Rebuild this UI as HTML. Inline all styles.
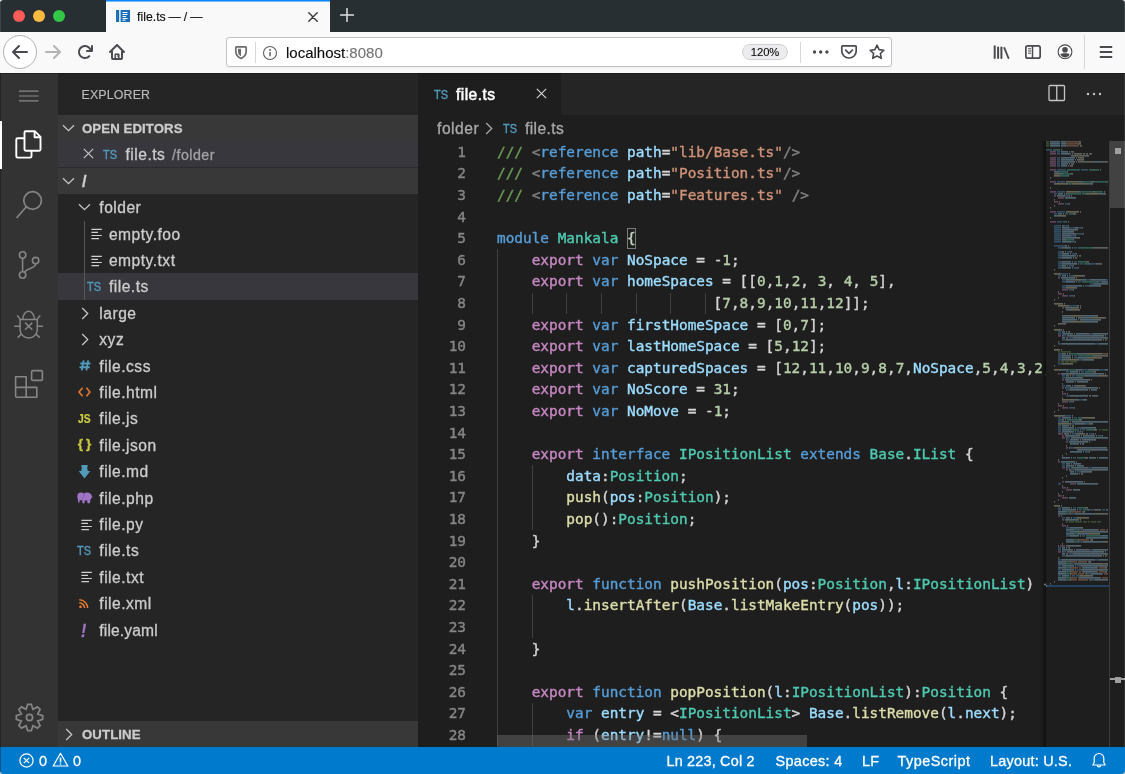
<!DOCTYPE html>
<html lang="en">
<head>
<meta charset="utf-8">
<title>file.ts — / —</title>
<style>
*{box-sizing:border-box;margin:0;padding:0}
html,body{width:1125px;height:774px;overflow:hidden;background:#1e1e1e}
body{position:relative;will-change:transform;-webkit-text-stroke:0.3px;font-family:"Liberation Sans",sans-serif;font-size:15.6px;color:#ccc}
.abs{position:absolute}
svg{display:block}
/* ---------- Firefox chrome ---------- */
#tabbar,#navbar{-webkit-text-stroke:0.12px}
#tabbar{position:absolute;left:0;top:0;width:1125px;height:32px;background:#282f33}
#tl span{position:absolute;top:10px;width:12px;height:12px;border-radius:50%}
#fftab{position:absolute;left:106px;top:0;width:224px;height:32px;background:#f9f9fa;border-top:1px solid #0a84ff;box-shadow:inset 0 1px 0 rgba(10,132,255,0.55)}
#fftab .title{position:absolute;left:31px;top:7.6px;font-size:12.3px;word-spacing:-0.5px;line-height:16px;color:#0c0c0d;white-space:nowrap}
#navbar{position:absolute;left:0;top:32px;width:1125px;height:41px;background:#f9f9fa}
#urlbar{position:absolute;left:226px;top:5px;width:666px;height:30px;background:#fff;border:1px solid #c2c2c5;border-radius:3px;box-shadow:0 1px 2px rgba(0,0,0,0.05)}
#url{position:absolute;left:59px;top:6px;font-size:15px;line-height:18px;color:#0c0c0d;white-space:nowrap}
#url i{font-style:normal;color:#737373}
#zoom{position:absolute;left:515px;top:6px;width:46px;height:16px;border-radius:8px;background:#ececee;border:1px solid #d2d2d5;font-size:11.2px;line-height:14.6px;text-align:center;color:#0c0c0d}
/* ---------- VS Code ---------- */
#activity{position:absolute;left:0;top:73px;width:58px;height:674px;background:#333}
#sidebar{position:absolute;left:58px;top:73px;width:360px;height:674px;background:#252526;overflow:hidden}
#editor{position:absolute;left:418px;top:73px;width:707px;height:674px;background:#1e1e1e;overflow:hidden}
#status{position:absolute;left:0;top:747px;width:1125px;height:27px;background:#007acc;color:#fff;font-size:14.4px}
#status span{position:absolute;top:5.6px;line-height:17px;white-space:nowrap;letter-spacing:0.2px}
/* sidebar */
.row{position:absolute;left:0;width:360px;height:26.4px;line-height:26.4px;white-space:nowrap;color:#ccc;letter-spacing:0.5px}
.row .lbl{position:absolute;top:1.05px}
.hdr{position:absolute;left:0;width:360px;background:#383838;font-weight:bold;font-size:13.2px;line-height:26px;color:#ccc;white-space:nowrap}
.ico{position:absolute;white-space:nowrap}
.ts{font-size:12.8px;letter-spacing:0;color:#519aba;line-height:26.4px;-webkit-text-stroke:0.4px;transform:scaleX(0.86);transform-origin:0 50%}
/* editor */
#tabs{position:absolute;left:0;top:0;width:707px;height:42px;background:#252526}
#tab1{position:absolute;left:0;top:0;width:143px;height:42px;background:#1e1e1e;color:#fff}
#crumbs{position:absolute;left:0;top:42px;width:707px;height:26.4px;line-height:26.4px;color:#a9a9a9;white-space:nowrap}
#code{-webkit-text-stroke:0.4px;position:absolute;left:0;top:68.4px;width:628px;height:606px;overflow:hidden;font-family:"DejaVu Sans Mono","Liberation Mono",monospace;font-size:14.4px;line-height:21.6px;color:#d4d4d4}
.ln{position:absolute;left:0;width:1200px;height:21.6px;white-space:pre}
.ln b{position:absolute;left:0;top:0.45px;width:48px;text-align:right;font-weight:normal;color:#858585}
.ln s{position:absolute;left:79px;top:0.45px;text-decoration:none}
.ln i{font-style:normal}
.g{position:absolute;width:1px;background:#404040}
.c{color:#6a9955}.t{color:#808080}.k{color:#569cd6}.v{color:#9cdcfe}.s{color:#ce9178}.y{color:#4ec9b0}.x{color:#c586c0}.n{color:#b5cea8}.f{color:#dcdcaa}
#minimap{position:absolute;left:628px;top:68px;width:63px;height:606px;background:#1e1e1e;overflow:hidden}
#mshadow{position:absolute;left:621px;top:68px;width:7px;height:606px;background:linear-gradient(90deg,rgba(0,0,0,0),rgba(0,0,0,0.08) 40%,rgba(0,0,0,0.5))}
#vscroll{position:absolute;left:691px;top:68.4px;width:16px;height:606px;border-left:1px solid #3c3c3c}
</style>
</head>
<body>
<!-- FIREFOX TAB BAR -->
<div id="tabbar">
  <div id="tl"><span style="left:13px;background:#fc5b57"></span><span style="left:33px;background:#fdbc40"></span><span style="left:53px;background:#33c748"></span></div>
  <div id="fftab">
    <svg class="abs" style="left:10px;top:9px" width="14" height="12" viewBox="0 0 14 12"><rect x="0" y="0" width="3.2" height="12" fill="#1a6fb8"/><rect x="4.6" y="0" width="9.4" height="12" fill="#1a6fb8"/><g stroke="#fff" stroke-width="1"><path d="M6.5 2.5h5M6.5 4.5h5M6.5 6.5h3.6M6.5 8.5h5M6.5 10.2h3"/></g></svg>
    <div class="title">file.ts — / —</div>
    <svg class="abs" style="left:201.9px;top:10.5px" width="10" height="10" viewBox="0 0 10 10"><path d="M0.8 0.8l8.4 8.4M9.2 0.8l-8.4 8.4" stroke="#3a3a3c" stroke-width="1.4" stroke-linecap="round"/></svg>
  </div>
  <svg class="abs" style="left:340px;top:8px" width="14" height="14" viewBox="0 0 14 14"><path d="M7 0.6v12.8M0.6 7h12.8" stroke="#dfe1e2" stroke-width="1.5" stroke-linecap="round"/></svg>
</div>
<!-- FIREFOX NAV BAR -->
<div id="navbar">
  <div class="abs" style="left:3px;top:3px;width:34px;height:34px;border-radius:50%;background:#fff;border:1px solid #b4b4b6"></div>
  <svg class="abs" style="left:12px;top:12px" width="16" height="16" viewBox="0 0 16 16"><path fill="#4a4a4f" d="M15 7H3.414l4.293-4.293a1 1 0 0 0-1.414-1.414l-6 6a1 1 0 0 0 0 1.414l6 6a1 1 0 0 0 1.414-1.414L3.414 9H15a1 1 0 0 0 0-2z"/></svg>
  <svg class="abs" style="left:45px;top:12px" width="16" height="16" viewBox="0 0 16 16"><path fill="#b4b4b6" d="M1 9h11.586l-4.293 4.293a1 1 0 0 0 1.414 1.414l6-6a1 1 0 0 0 0-1.414l-6-6a1 1 0 0 0-1.414 1.414L12.586 7H1a1 1 0 0 0 0 2z"/></svg>
  <svg class="abs" style="left:77px;top:12px" width="16" height="16" viewBox="0 0 16 16"><path fill="#4a4a4f" d="M15 1a1 1 0 0 0-1 1v2.418A6.995 6.995 0 1 0 8 15a6.954 6.954 0 0 0 4.95-2.05 1 1 0 0 0-1.414-1.414A5.019 5.019 0 1 1 12.549 6H10a1 1 0 0 0 0 2h5a1 1 0 0 0 1-1V2a1 1 0 0 0-1-1z"/></svg>
  <svg class="abs" style="left:109px;top:12px" width="16" height="16" viewBox="0 0 16 16"><g fill="none" stroke="#4a4a4f" stroke-linecap="round" stroke-linejoin="round"><path d="M1 8l7-7 7 7" stroke-width="2"/><path d="M3 7.5V14a1 1 0 0 0 1 1h8a1 1 0 0 0 1-1V7.5" stroke-width="2"/><path d="M6.2 15v-4.7h3.6V15" stroke-width="1.5"/></g><rect x="8" y="11.3" width="1" height="1.3" fill="#4a4a4f"/></svg>
  <div id="urlbar">
    <svg class="abs" style="left:7.2px;top:6.8px" width="14" height="15" viewBox="0 0 14 15"><path d="M2.5 1.9H11.5a.7 .7 0 0 1 .7 .7V6.3C12.2 10 10 12.2 7 13.5 4 12.2 1.8 10 1.8 6.3V2.6a.7 .7 0 0 1 .7-.7z" fill="none" stroke="#6c6c6e" stroke-width="1.7" stroke-linejoin="round"/><path d="M7 3.8H4v2.7C4 8.8 5.2 10.3 7 11.3z" fill="#6c6c6e"/></svg>
    <div class="abs" style="left:28px;top:4px;width:1px;height:21px;background:#d7d7db"></div>
    <svg class="abs" style="left:35px;top:7px" width="16" height="16" viewBox="0 0 16 16"><circle cx="8" cy="8" r="6.5" fill="none" stroke="#5f5f62" stroke-width="1.1"/><rect x="7.3" y="7" width="1.5" height="4.3" fill="#5f5f62"/><circle cx="8.05" cy="5" r="0.95" fill="#5f5f62"/></svg>
    <div id="url">localhost<i>:8080</i></div>
    <div id="zoom">120%</div>
    <div class="abs" style="left:573px;top:4px;width:1px;height:21px;background:#d7d7db"></div>
    <svg class="abs" style="left:585px;top:11.2px" width="18" height="6" viewBox="0 0 18 6"><circle cx="2.5" cy="3" r="1.7" fill="#4a4a4f"/><circle cx="8.7" cy="3" r="1.7" fill="#4a4a4f"/><circle cx="14.9" cy="3" r="1.7" fill="#4a4a4f"/></svg>
    <svg class="abs" style="left:613px;top:6.2px" width="18" height="16" viewBox="0 0 18 16"><path d="M2.5 1.9h13c.4 0 .7.3 .7.7V7c0 4-3.2 7-7.2 7S1.8 11 1.8 7V2.6c0-.4.3-.7.7-.7z" fill="none" stroke="#4a4a4f" stroke-width="1.7"/><path d="M5.6 6.2L9 9.4l3.4-3.2" fill="none" stroke="#4a4a4f" stroke-width="1.7" stroke-linecap="round" stroke-linejoin="round"/></svg>
    <svg class="abs" style="left:641px;top:5px" width="18" height="18" viewBox="0 0 18 18"><path d="M9 2.2l2.1 4.4 4.8.6-3.5 3.3.9 4.8L9 13l-4.3 2.3.9-4.8L2.1 7.2l4.8-.6z" fill="none" stroke="#4a4a4f" stroke-width="1.6" stroke-linejoin="round"/></svg>
  </div>
  <svg class="abs" style="left:993px;top:12px" width="17" height="16" viewBox="0 0 17 16"><g stroke="#4a4a4f" stroke-width="2" stroke-linecap="round"><path d="M1.7 2.2v11.8M5.1 3.6v10.4M8.4 3.6v10.4"/><path d="M11.4 4l4 10" stroke-width="1.9"/></g></svg>
  <svg class="abs" style="left:1025px;top:13px" width="16" height="14" viewBox="0 0 16 14"><rect x="0.85" y="0.85" width="14.3" height="12.3" rx="2" fill="none" stroke="#4a4a4f" stroke-width="1.7"/><path d="M7.5 1v12" stroke="#4a4a4f" stroke-width="1.5"/><path d="M3 3.8h3M3 6h3M3 8.2h3" stroke="#4a4a4f" stroke-width="1"/></svg>
  <svg class="abs" style="left:1057px;top:12px" width="16" height="16" viewBox="0 0 16 16"><circle cx="8" cy="7.8" r="6.9" fill="none" stroke="#4a4a4f" stroke-width="1.1"/><circle cx="8" cy="5.8" r="2.8" fill="#4a4a4f"/><path d="M3.3 10.3C4.5 9.5 6 9.2 8 9.2s3.5.3 4.7 1.1C11.9 12.2 10.1 13.5 8 13.5S4.1 12.2 3.3 10.3z" fill="#4a4a4f"/></svg>
  <div class="abs" style="left:1084px;top:3px;width:1px;height:34px;background:#d7d7db"></div>
  <svg class="abs" style="left:1099px;top:13px" width="14" height="14" viewBox="0 0 14 14"><path d="M1.5 2h11M1.5 7h11M1.5 12h11" stroke="#4a4a4f" stroke-width="1.8" stroke-linecap="round"/></svg>
</div>
<!-- ACTIVITY BAR -->
<div id="activity">
  <svg class="abs" style="left:18px;top:16px" width="22" height="14" viewBox="0 0 22 14"><path d="M1 2.2h19.5M1 7h19.5M1 11.8h19.5" stroke="#8a8a8a" stroke-width="1.2"/></svg>
  <div class="abs" style="left:0;top:48px;width:2.4px;height:48px;background:#fff;z-index:5"></div>
  <svg class="abs" style="left:14px;top:56px" width="29" height="30" viewBox="0 0 29 30"><g fill="none" stroke="#fff" stroke-width="1.9" stroke-linejoin="round"><path d="M10.5 20.5V3.5a1.2 1.2 0 0 1 1.2-1.2h9.3l5.5 5.5v12.7a1.2 1.2 0 0 1-1.2 1.2h-13.6a1.2 1.2 0 0 1-1.2-1.2z"/><path d="M20.6 2.5v5.7h5.7"/><path d="M10.5 9.2H3.7a1.4 1.4 0 0 0-1.4 1.4v16.6a1.4 1.4 0 0 0 1.4 1.4h12.4a1.4 1.4 0 0 0 1.4-1.4v-5.4"/></g></svg>
  <svg class="abs" style="left:14px;top:115px" width="30" height="32" viewBox="0 0 30 32"><circle cx="18.6" cy="12.5" r="8.8" fill="none" stroke="#858585" stroke-width="1.7"/><path d="M12.3 18.8L2.6 30" stroke="#858585" stroke-width="1.7"/></svg>
  <svg class="abs" style="left:14px;top:175px" width="30" height="32" viewBox="0 0 30 32"><g fill="none" stroke="#858585" stroke-width="1.6"><circle cx="8.6" cy="7" r="3.2"/><circle cx="8.6" cy="27" r="3.2"/><circle cx="21.6" cy="12.6" r="3.2"/><path d="M8.6 10.2v13.6M21.6 15.8C21.6 21.5 12 19.2 10.7 24.5"/></g></svg>
  <svg class="abs" style="left:13px;top:236px" width="32" height="32" viewBox="0 0 32 32"><g fill="none" stroke="#858585" stroke-width="1.5"><path d="M7.1 10.6H24.3V20.4a8.6 8.6 0 0 1-17.2 0z"/><path d="M9.8 10.6a5.8 8.4 0 0 1 11.6 0"/><path d="M7.1 17.2H1.3M24.3 17.2H30M7.3 10.4L4.2 6.4M24.1 10.4L27.2 6.4M8.8 24.6l-4.1 4M22.6 24.6l4.1 4"/><path d="M12.1 13.6l7.2 7.2M19.3 13.6l-7.2 7.2"/></g></svg>
  <svg class="abs" style="left:13px;top:295.4px" width="32" height="32" viewBox="0 0 32 32"><g fill="none" stroke="#858585" stroke-width="1.6" stroke-linejoin="round"><path d="M2.6 8.8h10.6v10.6h10.6v9.8H3.8a1.2 1.2 0 0 1-1.2-1.2zM2.6 19.4h10.6v9.8"/><rect x="18.6" y="2.6" width="10.8" height="9.8" rx="1.2"/></g></svg>
  <svg class="abs" style="left:14.8px;top:629.5px" width="29" height="29" viewBox="0 0 29 29"><path d="M12.68 1.33 L16.32 1.33 L17.91 6.28 L22.53 3.9 L25.1 6.47 L22.72 11.09 L27.67 12.68 L27.67 16.32 L22.72 17.91 L25.1 22.53 L22.53 25.1 L17.91 22.72 L16.32 27.67 L12.68 27.67 L11.09 22.72 L6.47 25.1 L3.9 22.53 L6.28 17.91 L1.33 16.32 L1.33 12.68 L6.28 11.09 L3.9 6.47 L6.47 3.9 L11.09 6.28Z" fill="none" stroke="#858585" stroke-width="1.7" stroke-linejoin="miter"/><circle cx="14.5" cy="14.5" r="3.1" fill="none" stroke="#858585" stroke-width="1.7"/></svg>
</div>
<!-- SIDEBAR -->
<div id="sidebar">
<div class="abs" style="left:23.5px;top:14px;font-size:12.4px;line-height:16px;color:#bbb;letter-spacing:0.15px;-webkit-text-stroke:0.15px">EXPLORER</div>
<div class="hdr" style="top:42px;height:26.5px"><span class="abs" style="left:24px;top:1px;letter-spacing:0.1px">OPEN EDITORS</span></div><svg class="abs" style="left:4.2px;top:51px" width="13" height="8" viewBox="0 0 13 8"><path d="M1 1.2l5.5 5.5L12 1.2" fill="none" stroke="#c5c5c5" stroke-width="1.3"/></svg>
<div class="row" style="top:68.5px;height:25.5px;background:#37373d"><svg class="abs" style="left:25.3px;top:6.2px" width="11" height="11" viewBox="0 0 11 11"><path d="M0.8 0.8l9.4 9.4M10.2 0.8l-9.4 9.4" stroke="#c5c5c5" stroke-width="1.2"/></svg><span class="ico ts" style="left:45px;top:0">TS</span><span class="lbl" style="left:67.5px;top:0.1px">file.ts</span><span class="lbl" style="left:114px;top:0.1px;font-size:14.2px;color:#a2a2a4;letter-spacing:0.5px">/folder</span></div>
<div class="hdr" style="top:94px;height:27.2px;border-top:1px solid #2b2b2c"><span class="abs" style="left:24px;top:-0.5px;font-size:16.5px">/</span></div><svg class="abs" style="left:4.2px;top:104px" width="13" height="8" viewBox="0 0 13 8"><path d="M1 1.2l5.5 5.5L12 1.2" fill="none" stroke="#c5c5c5" stroke-width="1.3"/></svg>
<div class="row" style="top:121.2px"><span class="lbl" style="left:41.3px">folder</span></div>
<svg class="abs" style="left:20.4px;top:130.4px" width="13" height="8" viewBox="0 0 13 8"><path d="M1 1.2l5.5 5.5L12 1.2" fill="none" stroke="#c5c5c5" stroke-width="1.3"/></svg>
<div class="row" style="top:147.6px"><span class="lbl" style="left:50.9px">empty.foo</span></div>
<svg class="abs" style="left:32.5px;top:155.1px" width="11" height="12" viewBox="0 0 11 12"><path d="M0.4 1.3h10.4M0.4 4.4h6.6M0.4 7.5h10.4M0.4 10.6h7.6" stroke="#cdd0cf" stroke-width="1.15"/></svg>
<div class="row" style="top:174px"><span class="lbl" style="left:50.9px">empty.txt</span></div>
<svg class="abs" style="left:32.5px;top:181.5px" width="11" height="12" viewBox="0 0 11 12"><path d="M0.4 1.3h10.4M0.4 4.4h6.6M0.4 7.5h10.4M0.4 10.6h7.6" stroke="#cdd0cf" stroke-width="1.15"/></svg>
<div class="row" style="top:200.4px;background:#37373d"><span class="lbl" style="left:50.9px">file.ts</span></div>
<span class="ico" style="left:28.7px;top:204.1px;line-height:20px;font-size:12.8px;color:#519aba;font-weight:normal;-webkit-text-stroke:0.4px;transform:scaleX(0.86);transform-origin:0 50%">TS</span>
<div class="row" style="top:226.8px"><span class="lbl" style="left:41.3px">large</span></div>
<svg class="abs" style="left:23.3px;top:233.5px" width="8" height="13" viewBox="0 0 8 13"><path d="M1.2 1l5.5 5.5L1.2 12" fill="none" stroke="#c5c5c5" stroke-width="1.3"/></svg>
<div class="row" style="top:253.2px"><span class="lbl" style="left:41.3px">xyz</span></div>
<svg class="abs" style="left:23.3px;top:259.9px" width="8" height="13" viewBox="0 0 8 13"><path d="M1.2 1l5.5 5.5L1.2 12" fill="none" stroke="#c5c5c5" stroke-width="1.3"/></svg>
<div class="row" style="top:279.6px"><span class="lbl" style="left:41.3px">file.css</span></div>
<svg class="abs" style="left:20.5px;top:287.4px" width="12" height="11" viewBox="0 0 12 11"><path d="M4.6 0.3L2.8 10.3M9.2 0.3L7.4 10.3M1.3 3.5h10.2M0.5 7.2h10.2" fill="none" stroke="#519aba" stroke-width="1.9"/></svg>
<div class="row" style="top:306px"><span class="lbl" style="left:41.3px">file.html</span></div>
<svg class="abs" style="left:20.2px;top:314.2px" width="13" height="10" viewBox="0 0 13 10"><path d="M4.6 0.8L1 5l3.6 4.2M8.4 0.8L12 5l-3.6 4.2" fill="none" stroke="#e37933" stroke-width="1.6"/></svg>
<div class="row" style="top:332.4px"><span class="lbl" style="left:41.3px">file.js</span></div>
<span class="ico" style="left:20px;top:336px;line-height:20px;font-size:12.6px;color:#cbcb41;font-weight:bold;transform:scaleX(0.82);transform-origin:0 50%;-webkit-text-stroke:0.2px">JS</span>
<div class="row" style="top:358.8px"><span class="lbl" style="left:41.3px">file.json</span></div>
<span class="ico" style="left:19.7px;top:361.2px;line-height:20px;font-size:13.6px;color:#cbcb41;font-weight:bold;letter-spacing:3px">{}</span>
<div class="row" style="top:385.2px"><span class="lbl" style="left:41.3px">file.md</span></div>
<svg class="abs" style="left:20.2px;top:391.7px" width="13" height="14" viewBox="0 0 13 14"><path d="M3.2 0h6.6l-.6 3 .6 3H12.3L6.5 13.4 0.7 6h2.5l.6-3z" fill="#519aba"/></svg>
<div class="row" style="top:411.6px"><span class="lbl" style="left:41.3px">file.php</span></div>
<svg class="abs" style="left:18.5px;top:419.3px" width="16" height="12" viewBox="0 0 16 12"><g fill="#a074c4"><ellipse cx="4" cy="4.3" rx="3.7" ry="3.9"/><ellipse cx="10.1" cy="4.6" rx="4.8" ry="4"/><path d="M14.5 3.8l1.3 1.3-1.3.4zM5.3 6h2.4v4.6a1.2 .8 0 0 1-2.4 0zM10.3 6h2.9v4.6a1.45 .8 0 0 1-2.9 0zM0.8 6l2.2.6-.5 3.6c-.2 .7-1.3 .7-1.4-.1z"/></g><path d="M6.8 1.6c.8 1.8 .2 4-1.8 5.2" fill="none" stroke="#7a5896" stroke-width="0.8"/></svg>
<div class="row" style="top:438px"><span class="lbl" style="left:41.3px">file.py</span></div>
<svg class="abs" style="left:23.2px;top:445.5px" width="11" height="12" viewBox="0 0 11 12"><path d="M0.4 1.3h10.4M0.4 4.4h6.6M0.4 7.5h10.4M0.4 10.6h7.6" stroke="#cdd0cf" stroke-width="1.15"/></svg>
<div class="row" style="top:464.4px"><span class="lbl" style="left:41.3px">file.ts</span></div>
<span class="ico" style="left:19.4px;top:468.1px;line-height:20px;font-size:12.8px;color:#519aba;font-weight:normal;-webkit-text-stroke:0.4px;transform:scaleX(0.86);transform-origin:0 50%">TS</span>
<div class="row" style="top:490.8px"><span class="lbl" style="left:41.3px">file.txt</span></div>
<svg class="abs" style="left:23.2px;top:498.3px" width="11" height="12" viewBox="0 0 11 12"><path d="M0.4 1.3h10.4M0.4 4.4h6.6M0.4 7.5h10.4M0.4 10.6h7.6" stroke="#cdd0cf" stroke-width="1.15"/></svg>
<div class="row" style="top:517.2px"><span class="lbl" style="left:41.3px">file.xml</span></div>
<svg class="abs" style="left:21.4px;top:525.6px" width="9.8" height="9.8" viewBox="0 0 11 11"><circle cx="1.7" cy="8.8" r="1.5" fill="#e37933"/><path d="M0.3 4.3a6 6 0 0 1 6 6M0.3 0.9a9.4 9.4 0 0 1 9.4 9.4" fill="none" stroke="#e37933" stroke-width="1.7"/></svg>
<div class="row" style="top:543.6px"><span class="lbl" style="left:41.3px;letter-spacing:0.15px">file.yaml</span></div>
<span class="ico" style="left:22.8px;top:547.7px;line-height:20px;font-size:18.5px;color:#a074c4;font-weight:bold;font-style:italic;transform:scaleX(0.85);transform-origin:0 50%">!</span>
<div class="abs" style="left:26px;top:147.6px;width:1px;height:79.2px;background:#585858"></div>
<div class="hdr" style="top:647.5px;height:26.5px"><span class="abs" style="left:24px;top:1px;letter-spacing:0.1px">OUTLINE</span></div><svg class="abs" style="left:6.6px;top:655.1px" width="8" height="13" viewBox="0 0 8 13"><path d="M1.2 1l5.5 5.5L1.2 12" fill="none" stroke="#c5c5c5" stroke-width="1.3"/></svg>
</div>
<!-- EDITOR -->
<div id="editor">
  <div id="tabs">
    <div id="tab1">
      <span class="ico ts" style="left:16px;top:9px">TS</span>
      <span class="abs" style="left:38px;top:12px;line-height:20px;letter-spacing:0.45px;-webkit-text-stroke:0.55px">file.ts</span>
      <svg class="abs" style="left:117.5px;top:15.2px" width="11" height="11" viewBox="0 0 11 11"><path d="M0.8 0.8l9.4 9.4M10.2 0.8l-9.4 9.4" stroke="#d0d0d0" stroke-width="1.2"/></svg>
    </div>
    <svg class="abs" style="left:630px;top:11px" width="18" height="18" viewBox="0 0 18 18"><rect x="1" y="1.5" width="15.5" height="15" rx="1" fill="none" stroke="#c5c5c5" stroke-width="1.3"/><path d="M8.75 1.5v15" stroke="#c5c5c5" stroke-width="1.3"/></svg>
    <svg class="abs" style="left:668px;top:19px" width="16" height="4" viewBox="0 0 16 4"><circle cx="2" cy="2" r="1.2" fill="#c5c5c5"/><circle cx="8" cy="2" r="1.2" fill="#c5c5c5"/><circle cx="14" cy="2" r="1.2" fill="#c5c5c5"/></svg>
  </div>
  <div id="crumbs">
    <span class="abs" style="left:19px;top:0.8px;letter-spacing:0.55px">folder</span>
    <svg class="abs" style="left:67px;top:7px" width="8" height="13" viewBox="0 0 8 13"><path d="M1.2 1l5.5 5.5L1.2 12" fill="none" stroke="#a9a9a9" stroke-width="1.3"/></svg>
    <span class="ico ts" style="left:85px;top:0.8px">TS</span>
    <span class="abs" style="left:107px;top:0.8px;letter-spacing:0.4px">file.ts</span>
  </div>
  <div id="code">
<div class="ln" style="top:0px"><b>1</b><s><i class="c">/// </i><i class="t">&lt;</i><i class="k">reference</i> <i class="v">path</i>=<i class="s">"lib/Base.ts"</i><i class="t">/&gt;</i></s></div>
<div class="ln" style="top:21.6px"><b>2</b><s><i class="c">/// </i><i class="t">&lt;</i><i class="k">reference</i> <i class="v">path</i>=<i class="s">"Position.ts"</i><i class="t">/&gt;</i></s></div>
<div class="ln" style="top:43.2px"><b>3</b><s><i class="c">/// </i><i class="t">&lt;</i><i class="k">reference</i> <i class="v">path</i>=<i class="s">"Features.ts"</i> <i class="t">/&gt;</i></s></div>
<div class="ln" style="top:64.8px"><b>4</b><s></s></div>
<div class="ln" style="top:86.4px"><b>5</b><s><i class="k">module</i> <i class="y">Mankala</i> {</s></div>
<div class="ln" style="top:108px"><b>6</b><s>    <i class="x">export</i> <i class="k">var</i> <i class="v">NoSpace</i> = -<i class="n">1</i>;</s></div>
<div class="ln" style="top:129.6px"><b>7</b><s>    <i class="x">export</i> <i class="k">var</i> <i class="v">homeSpaces</i> = [[<i class="n">0</i>,<i class="n">1</i>,<i class="n">2</i>, <i class="n">3</i>, <i class="n">4</i>, <i class="n">5</i>],</s></div>
<div class="ln" style="top:151.2px"><b>8</b><s>                         [<i class="n">7</i>,<i class="n">8</i>,<i class="n">9</i>,<i class="n">10</i>,<i class="n">11</i>,<i class="n">12</i>]];</s></div>
<div class="ln" style="top:172.8px"><b>9</b><s>    <i class="x">export</i> <i class="k">var</i> <i class="v">firstHomeSpace</i> = [<i class="n">0</i>,<i class="n">7</i>];</s></div>
<div class="ln" style="top:194.4px"><b>10</b><s>    <i class="x">export</i> <i class="k">var</i> <i class="v">lastHomeSpace</i> = [<i class="n">5</i>,<i class="n">12</i>];</s></div>
<div class="ln" style="top:216px"><b>11</b><s>    <i class="x">export</i> <i class="k">var</i> <i class="v">capturedSpaces</i> = [<i class="n">12</i>,<i class="n">11</i>,<i class="n">10</i>,<i class="n">9</i>,<i class="n">8</i>,<i class="n">7</i>,<i class="v">NoSpace</i>,<i class="n">5</i>,<i class="n">4</i>,<i class="n">3</i>,<i class="n">2</i>,<i class="n">1</i>,<i class="n">0</i>,<i class="v">NoSpace</i>];</s></div>
<div class="ln" style="top:237.6px"><b>12</b><s>    <i class="x">export</i> <i class="k">var</i> <i class="v">NoScore</i> = <i class="n">31</i>;</s></div>
<div class="ln" style="top:259.2px"><b>13</b><s>    <i class="x">export</i> <i class="k">var</i> <i class="v">NoMove</i> = -<i class="n">1</i>;</s></div>
<div class="ln" style="top:280.8px"><b>14</b><s></s></div>
<div class="ln" style="top:302.4px"><b>15</b><s>    <i class="x">export</i> <i class="k">interface</i> <i class="y">IPositionList</i> <i class="k">extends</i> <i class="y">Base</i>.<i class="y">IList</i> {</s></div>
<div class="ln" style="top:324px"><b>16</b><s>        <i class="v">data</i>:<i class="y">Position</i>;</s></div>
<div class="ln" style="top:345.6px"><b>17</b><s>        <i class="f">push</i>(<i class="v">pos</i>:<i class="y">Position</i>);</s></div>
<div class="ln" style="top:367.2px"><b>18</b><s>        <i class="f">pop</i>():<i class="y">Position</i>;</s></div>
<div class="ln" style="top:388.8px"><b>19</b><s>    }</s></div>
<div class="ln" style="top:410.4px"><b>20</b><s></s></div>
<div class="ln" style="top:432px"><b>21</b><s>    <i class="x">export</i> <i class="k">function</i> <i class="f">pushPosition</i>(<i class="v">pos</i>:<i class="y">Position</i>,<i class="v">l</i>:<i class="y">IPositionList</i>) {</s></div>
<div class="ln" style="top:453.6px"><b>22</b><s>        <i class="v">l</i>.<i class="f">insertAfter</i>(<i class="v">Base</i>.<i class="f">listMakeEntry</i>(<i class="v">pos</i>));</s></div>
<div class="ln" style="top:475.2px"><b>23</b><s></s></div>
<div class="ln" style="top:496.8px"><b>24</b><s>    }</s></div>
<div class="ln" style="top:518.4px"><b>25</b><s></s></div>
<div class="ln" style="top:540px"><b>26</b><s>    <i class="x">export</i> <i class="k">function</i> <i class="f">popPosition</i>(<i class="v">l</i>:<i class="y">IPositionList</i>):<i class="y">Position</i> {</s></div>
<div class="ln" style="top:561.6px"><b>27</b><s>        <i class="k">var</i> <i class="v">entry</i> = &lt;<i class="y">IPositionList</i>&gt; <i class="v">Base</i>.<i class="f">listRemove</i>(<i class="v">l</i>.<i class="v">next</i>);</s></div>
<div class="ln" style="top:583.2px"><b>28</b><s>        <i class="x">if</i> (<i class="v">entry</i>!=<i class="k">null</i>) {</s></div>
<div class="g" style="left:79px;top:108px;height:496.8px"></div>
<div class="g" style="left:113.7px;top:151.2px;height:21.6px"></div>
<div class="g" style="left:148.4px;top:151.2px;height:21.6px"></div>
<div class="g" style="left:183px;top:151.2px;height:21.6px"></div>
<div class="g" style="left:217.7px;top:151.2px;height:21.6px"></div>
<div class="g" style="left:252.4px;top:151.2px;height:21.6px"></div>
<div class="g" style="left:287.1px;top:151.2px;height:21.6px"></div>
<div class="g" style="left:113.7px;top:324px;height:64.8px"></div>
<div class="g" style="left:113.7px;top:453.6px;height:43.2px"></div>
<div class="g" style="left:113.7px;top:561.6px;height:43.2px"></div>
  <div class="abs" style="left:208.8px;top:86.4px;width:9px;height:21.6px;border:1px solid #7c7c7c;background:rgba(0,100,0,0.05)"></div>
  </div>
  <div class="abs" style="left:79px;top:662px;width:310px;height:12px;background:rgba(121,121,121,0.4)"></div>
  <div id="mshadow"></div>
  <div id="minimap">
<svg class="abs" style="left:0;top:0" width="63" height="450" viewBox="0 0 63 450">
<rect x="0" y="444" width="63" height="2" fill="#264f78" fill-opacity="0.75"/>
<path d="M0 0.9h3M0 2.9h3M0 4.9h3M12 210.9h2M15 210.9h10M12 220.9h2M15 220.9h3M19 220.9h4M24 220.9h7M53 288.9h2M56 288.9h6M20 380.9h2M23 380.9h5M29 380.9h7M37 380.9h4M42 380.9h2M45 380.9h5M51 380.9h4" stroke="#6a9955" stroke-width="1.4" stroke-opacity="0.66" stroke-dasharray="0.75 0.25" fill="none"/>
<path d="M20 0.9h13M20 2.9h13M20 4.9h13M56 212.9h5M25 370.9h10M36 370.9h1M52 388.9h1M54 388.9h5M60 388.9h2M33 398.9h10M44 398.9h1M25 420.9h6M32 420.9h9M42 420.9h1M25 426.9h7M33 426.9h2M36 426.9h1M51 426.9h1M53 426.9h6M25 430.9h7M33 430.9h2M36 430.9h1M51 430.9h1M53 430.9h6M25 432.9h6M32 432.9h6M39 432.9h1M56 432.9h1M58 432.9h4M25 436.9h6M32 436.9h1M54 436.9h1M56 436.9h6M25 438.9h6M32 438.9h10M43 438.9h1" stroke="#ce9178" stroke-width="1.4" stroke-opacity="0.66" stroke-dasharray="0.75 0.25" fill="none"/>
<path d="M26 10.9h1M30 12.9h1M32 12.9h1M34 12.9h1M37 12.9h1M40 12.9h1M43 12.9h1M26 14.9h1M28 14.9h1M30 14.9h1M32 14.9h2M35 14.9h2M38 14.9h2M33 16.9h1M35 16.9h1M32 18.9h1M34 18.9h2M33 20.9h2M36 20.9h2M39 20.9h2M42 20.9h1M44 20.9h1M46 20.9h1M56 20.9h1M58 20.9h1M60 20.9h1M25 22.9h2M25 24.9h1M30 88.9h1M26 90.9h1M49 106.9h1M51 106.9h1M53 106.9h1M55 106.9h1M57 106.9h1M59 106.9h1M61 106.9h1M33 114.9h1M29 116.9h1M52 122.9h2M14 182.9h4M22 190.9h1M41 192.9h1M23 194.9h1M59 198.9h1M49 214.9h1M51 214.9h1M53 214.9h1M55 214.9h1M57 214.9h1M59 214.9h1M61 214.9h1M60 234.9h1M31 240.9h1M26 284.9h1M27 296.9h1M27 326.9h1M51 368.9h2M56 372.9h1M58 372.9h1M22 406.9h1M41 408.9h1M23 410.9h1M59 414.9h1M56 422.9h1M58 422.9h1" stroke="#b5cea8" stroke-width="1.4" stroke-opacity="0.66" stroke-dasharray="0.75 0.25" fill="none"/>
<path d="M0 8.9h6M11 10.9h3M11 12.9h3M11 16.9h3M11 18.9h3M11 20.9h3M11 22.9h3M11 24.9h3M11 28.9h9M35 28.9h7M11 40.9h8M11 50.9h8M8 52.9h3M19 54.9h4M19 62.9h4M11 70.9h8M8 72.9h3M19 72.9h3M11 80.9h5M8 84.9h7M18 84.9h4M8 86.9h7M23 86.9h6M32 86.9h4M8 88.9h7M8 90.9h7M8 92.9h7M30 92.9h7M8 94.9h7M25 94.9h4M8 96.9h7M8 98.9h7M8 100.9h7M25 100.9h4M8 104.9h11M12 106.9h4M28 106.9h3M12 110.9h4M21 110.9h4M12 112.9h4M26 112.9h4M12 114.9h4M12 116.9h4M12 120.9h4M28 120.9h3M12 122.9h4M34 122.9h3M44 122.9h6M12 124.9h4M23 124.9h4M12 126.9h4M28 126.9h4M15 132.9h7M12 134.9h3M23 134.9h4M16 138.9h4M40 138.9h4M60 138.9h2M16 140.9h4M32 140.9h3M52 140.9h4M44 142.9h4M16 144.9h4M39 144.9h4M16 146.9h4M23 148.9h4M23 154.9h5M23 164.9h8M12 190.9h3M12 192.9h3M43 192.9h4M17 194.9h3M23 196.9h4M16 198.9h4M12 202.9h4M49 202.9h4M12 212.9h4M12 214.9h4M28 214.9h3M12 216.9h4M28 216.9h4M12 218.9h4M33 218.9h4M12 222.9h4M36 228.9h6M53 228.9h6M20 230.9h3M35 230.9h3M16 234.9h3M26 234.9h3M16 236.9h4M16 244.9h3M20 246.9h4M20 248.9h4M20 254.9h4M33 258.9h4M23 260.9h4M23 266.9h5M19 274.9h6M12 276.9h3M28 276.9h3M12 278.9h4M12 280.9h4M25 282.9h4M39 282.9h4M12 284.9h3M12 286.9h3M31 286.9h4M12 288.9h3M36 288.9h3M12 290.9h3M31 290.9h5M26 292.9h4M43 292.9h4M52 294.9h4M21 296.9h3M20 298.9h3M24 306.9h4M39 310.9h4M27 316.9h3M16 322.9h3M16 324.9h3M21 326.9h3M42 326.9h4M25 328.9h4M31 330.9h4M12 342.9h3M12 366.9h3M27 366.9h3M12 368.9h3M33 368.9h3M43 368.9h6M56 368.9h3M25 372.9h4M16 376.9h3M27 376.9h4M20 386.9h4M33 388.9h4M20 390.9h4M20 394.9h4M36 394.9h3M33 400.9h4M12 406.9h3M12 408.9h3M43 408.9h4M17 410.9h3M23 412.9h4M16 414.9h4M12 418.9h4M49 418.9h4M25 422.9h4M12 424.9h3M31 424.9h4M12 428.9h3M31 428.9h4M41 432.9h4M12 434.9h3M26 434.9h3M45 438.9h4" stroke="#569cd6" stroke-width="1.4" stroke-opacity="0.66" stroke-dasharray="0.75 0.25" fill="none"/>
<path d="M4 10.9h6M4 12.9h6M4 16.9h6M4 18.9h6M4 20.9h6M4 22.9h6M4 24.9h6M4 28.9h6M4 40.9h6M4 50.9h6M8 54.9h2M12 56.9h6M8 60.9h4M12 62.9h6M4 70.9h6M4 80.9h6M12 136.9h2M16 148.9h6M12 152.9h4M16 154.9h6M16 166.9h2M12 194.9h3M12 232.9h2M16 238.9h2M16 246.9h2M16 252.9h4M16 260.9h6M12 264.9h4M16 266.9h6M12 292.9h5M16 294.9h2M16 296.9h3M20 300.9h2M20 306.9h2M12 320.9h2M16 326.9h3M20 328.9h2M16 340.9h2M24 342.9h6M16 346.9h4M20 348.9h6M12 354.9h4M16 356.9h6M12 374.9h2M16 378.9h2M16 384.9h4M14 404.9h5M12 410.9h3" stroke="#c586c0" stroke-width="1.4" stroke-opacity="0.66" stroke-dasharray="0.75 0.25" fill="none"/>
<path d="M7 8.9h7M21 28.9h13M43 28.9h4M48 28.9h5M13 30.9h8M17 32.9h8M14 34.9h8M37 40.9h8M48 40.9h13M22 42.9h4M34 50.9h13M49 50.9h8M21 52.9h13M36 52.9h4M23 72.9h4M17 80.9h4M20 98.9h7M32 106.9h15M32 120.9h8M38 122.9h5M36 140.9h15M24 212.9h7M32 214.9h15M22 228.9h8M39 230.9h8M30 234.9h8M32 276.9h4M21 278.9h12M25 288.9h8M40 288.9h8M31 316.9h8M31 366.9h8M37 368.9h5M20 370.9h4M20 372.9h4M28 388.9h4M28 392.9h4M40 394.9h15M28 398.9h4M28 400.9h4M20 420.9h4M20 422.9h4M20 426.9h4M20 430.9h4M20 432.9h4M30 434.9h4M20 436.9h4M20 438.9h4" stroke="#4ec9b0" stroke-width="1.4" stroke-opacity="0.66" stroke-dasharray="0.75 0.25" fill="none"/>
<path d="M8 32.9h4M8 34.9h3M20 40.9h12M10 42.9h11M27 42.9h13M20 50.9h11M41 52.9h10M20 70.9h11M13 74.9h4M8 132.9h4M28 134.9h8M30 138.9h4M21 146.9h7M8 162.9h7M12 164.9h10M26 166.9h4M25 168.9h6M25 174.9h11M46 176.9h11M25 180.9h11M8 188.9h6M8 208.9h4M41 212.9h14M42 216.9h11M21 218.9h11M17 222.9h7M8 228.9h6M23 232.9h4M54 234.9h5M32 244.9h5M16 258.9h12M8 274.9h8M39 276.9h7M12 282.9h12M33 292.9h3M29 306.9h6M8 364.9h4M50 372.9h5M32 376.9h8M34 390.9h4M42 392.9h8M58 400.9h4M50 422.9h5M37 434.9h7" stroke="#dcdcaa" stroke-width="1.4" stroke-opacity="0.66" stroke-dasharray="0.75 0.25" fill="none"/>
<path d="M5 0.9h9M15 0.9h4M5 2.9h9M15 2.9h4M5 4.9h9M15 4.9h4M15 10.9h7M15 12.9h10M15 16.9h14M15 18.9h13M15 20.9h14M48 20.9h7M15 22.9h7M15 24.9h6M8 30.9h4M13 32.9h3M33 40.9h3M46 40.9h1M8 42.9h1M41 42.9h3M32 50.9h1M12 52.9h5M52 52.9h1M54 52.9h4M12 54.9h5M19 56.9h5M25 56.9h4M12 72.9h4M8 74.9h4M16 84.9h1M16 86.9h6M16 88.9h13M16 90.9h9M16 92.9h13M16 94.9h8M16 96.9h14M16 98.9h3M16 100.9h8M17 106.9h8M17 110.9h1M17 112.9h6M17 114.9h13M17 116.9h9M17 120.9h8M17 122.9h14M17 124.9h3M17 126.9h8M16 134.9h4M16 136.9h4M22 136.9h6M21 138.9h8M35 138.9h4M45 138.9h14M21 140.9h8M57 140.9h5M49 142.9h8M58 142.9h4M21 144.9h8M30 144.9h6M44 144.9h10M21 166.9h4M20 168.9h4M16 174.9h4M21 174.9h3M37 174.9h4M42 174.9h8M16 176.9h4M21 176.9h8M32 176.9h4M37 176.9h8M16 178.9h4M21 178.9h10M34 178.9h4M39 178.9h8M48 178.9h6M16 180.9h4M21 180.9h3M37 180.9h4M42 180.9h8M16 190.9h3M16 192.9h11M30 192.9h10M48 192.9h8M57 192.9h4M21 194.9h1M25 194.9h3M29 194.9h11M41 194.9h6M48 194.9h1M50 194.9h3M54 194.9h1M16 196.9h3M28 196.9h8M37 196.9h10M48 196.9h11M60 196.9h1M21 198.9h8M30 198.9h10M41 198.9h11M53 198.9h1M17 202.9h8M26 202.9h10M37 202.9h11M54 202.9h8M17 212.9h3M32 212.9h8M17 214.9h8M17 216.9h8M33 216.9h8M17 218.9h3M38 218.9h8M15 228.9h6M31 228.9h4M43 228.9h9M60 228.9h2M24 230.9h8M16 232.9h6M28 232.9h4M33 232.9h14M48 232.9h8M20 234.9h3M39 234.9h14M21 236.9h13M21 238.9h8M30 238.9h13M20 240.9h3M24 240.9h4M33 240.9h3M37 240.9h4M20 244.9h5M28 244.9h3M25 246.9h6M32 246.9h9M44 246.9h7M25 248.9h6M32 248.9h9M45 248.9h5M25 254.9h6M32 254.9h9M46 254.9h5M29 258.9h3M38 258.9h1M16 276.9h9M17 278.9h1M17 280.9h6M27 280.9h7M35 280.9h7M43 280.9h7M51 280.9h7M59 280.9h3M30 282.9h8M44 282.9h1M16 284.9h7M16 286.9h12M36 286.9h8M45 286.9h4M16 288.9h8M16 290.9h12M20 292.9h3M31 292.9h1M21 294.9h12M37 294.9h12M25 296.9h1M29 296.9h3M33 296.9h10M44 296.9h3M48 296.9h4M54 296.9h6M61 296.9h1M24 298.9h9M36 298.9h3M40 298.9h9M24 300.9h9M35 300.9h6M24 302.9h9M36 302.9h1M36 306.9h3M40 306.9h10M51 306.9h9M31 308.9h14M49 308.9h7M57 308.9h3M24 310.9h12M16 316.9h8M43 316.9h7M53 316.9h9M16 320.9h12M20 322.9h4M27 322.9h7M20 324.9h8M31 324.9h6M25 326.9h1M29 326.9h1M31 326.9h10M47 326.9h8M56 326.9h4M30 328.9h6M37 328.9h1M41 328.9h7M53 328.9h4M59 328.9h3M24 330.9h4M36 330.9h6M43 330.9h1M24 332.9h8M35 332.9h1M20 340.9h8M30 340.9h6M31 342.9h10M42 342.9h8M27 348.9h6M23 356.9h6M16 366.9h8M16 368.9h14M60 368.9h2M12 370.9h7M12 372.9h7M30 372.9h8M39 372.9h10M20 376.9h4M20 378.9h4M26 378.9h6M25 386.9h9M20 388.9h7M38 388.9h8M47 388.9h4M25 390.9h8M39 390.9h4M44 390.9h14M59 390.9h3M20 392.9h7M33 392.9h8M25 394.9h8M56 394.9h6M40 396.9h8M49 396.9h13M20 398.9h7M20 400.9h7M38 400.9h8M47 400.9h10M21 404.9h4M27 404.9h6M16 406.9h3M16 408.9h11M30 408.9h10M48 408.9h8M57 408.9h4M21 410.9h1M25 410.9h3M29 410.9h11M41 410.9h6M48 410.9h1M50 410.9h3M54 410.9h1M16 412.9h3M28 412.9h8M37 412.9h10M48 412.9h11M60 412.9h1M21 414.9h8M30 414.9h10M41 414.9h11M53 414.9h1M17 418.9h8M26 418.9h10M37 418.9h11M54 418.9h8M12 420.9h7M12 422.9h7M30 422.9h8M39 422.9h10M16 424.9h12M36 424.9h8M45 424.9h10M56 424.9h6M12 426.9h7M38 426.9h12M16 428.9h12M36 428.9h8M45 428.9h10M56 428.9h6M12 430.9h7M38 430.9h12M12 432.9h7M46 432.9h9M16 434.9h7M12 436.9h7M35 436.9h7M43 436.9h9M12 438.9h7M50 438.9h12" stroke="#9cdcfe" stroke-width="1.4" stroke-opacity="0.66" stroke-dasharray="0.75 0.25" fill="none"/>
<path d="M4 0.9h1M19 0.9h1M33 0.9h1M34 0.9h1M4 2.9h1M19 2.9h1M33 2.9h1M34 2.9h1M4 4.9h1M19 4.9h1M34 4.9h1M35 4.9h1M15 8.9h1M23 10.9h1M25 10.9h1M27 10.9h1M26 12.9h1M28 12.9h1M29 12.9h1M31 12.9h1M33 12.9h1M35 12.9h1M38 12.9h1M41 12.9h1M44 12.9h1M45 12.9h1M25 14.9h1M27 14.9h1M29 14.9h1M31 14.9h1M34 14.9h1M37 14.9h1M40 14.9h1M41 14.9h1M42 14.9h1M30 16.9h1M32 16.9h1M34 16.9h1M36 16.9h1M37 16.9h1M29 18.9h1M31 18.9h1M33 18.9h1M36 18.9h1M37 18.9h1M30 20.9h1M32 20.9h1M35 20.9h1M38 20.9h1M41 20.9h1M43 20.9h1M45 20.9h1M47 20.9h1M55 20.9h1M57 20.9h1M59 20.9h1M61 20.9h1M23 22.9h1M27 22.9h1M22 24.9h1M24 24.9h1M26 24.9h1M47 28.9h1M54 28.9h1M12 30.9h1M21 30.9h1M12 32.9h1M16 32.9h1M25 32.9h1M26 32.9h1M11 34.9h1M12 34.9h1M13 34.9h1M22 34.9h1M4 36.9h1M32 40.9h1M36 40.9h1M45 40.9h1M47 40.9h1M61 40.9h1M9 42.9h1M21 42.9h1M26 42.9h1M40 42.9h1M44 42.9h1M45 42.9h1M46 42.9h1M4 46.9h1M31 50.9h1M33 50.9h1M47 50.9h1M48 50.9h1M58 50.9h1M18 52.9h1M20 52.9h1M34 52.9h1M40 52.9h1M51 52.9h1M53 52.9h1M58 52.9h1M59 52.9h1M11 54.9h1M17 54.9h1M18 54.9h1M23 54.9h1M25 54.9h1M24 56.9h1M29 56.9h1M8 58.9h1M13 60.9h1M23 62.9h1M8 64.9h1M4 66.9h1M31 70.9h1M32 70.9h1M34 70.9h1M17 72.9h1M27 72.9h1M28 72.9h1M29 72.9h1M12 74.9h1M17 74.9h1M18 74.9h1M19 74.9h1M4 76.9h1M22 80.9h1M17 84.9h1M22 84.9h1M22 86.9h1M29 86.9h1M30 86.9h1M31 86.9h1M36 86.9h1M29 88.9h1M31 88.9h1M25 90.9h1M27 90.9h1M29 92.9h1M37 92.9h1M24 94.9h1M29 94.9h1M30 96.9h1M31 96.9h1M32 96.9h1M33 96.9h1M19 98.9h1M27 98.9h1M24 100.9h1M29 100.9h1M19 104.9h1M20 104.9h1M22 104.9h1M16 106.9h1M26 106.9h1M47 106.9h1M48 106.9h1M50 106.9h1M52 106.9h1M54 106.9h1M56 106.9h1M58 106.9h1M60 106.9h1M16 110.9h1M19 110.9h1M25 110.9h1M16 112.9h1M24 112.9h1M30 112.9h1M16 114.9h1M31 114.9h1M34 114.9h1M16 116.9h1M27 116.9h1M30 116.9h1M16 120.9h1M26 120.9h1M40 120.9h1M41 120.9h1M42 120.9h1M16 122.9h1M32 122.9h1M43 122.9h1M50 122.9h1M51 122.9h1M54 122.9h1M55 122.9h1M16 124.9h1M21 124.9h1M27 124.9h1M16 126.9h1M26 126.9h1M32 126.9h1M8 128.9h1M12 132.9h1M13 132.9h1M14 132.9h1M23 132.9h1M21 134.9h1M27 134.9h1M36 134.9h1M37 134.9h1M38 134.9h1M15 136.9h1M20 136.9h1M21 136.9h1M28 136.9h1M30 136.9h1M20 138.9h1M29 138.9h1M34 138.9h1M39 138.9h1M44 138.9h1M59 138.9h1M20 140.9h1M30 140.9h1M51 140.9h1M56 140.9h1M48 142.9h1M57 142.9h1M20 144.9h1M29 144.9h1M37 144.9h1M43 144.9h1M54 144.9h1M20 146.9h1M28 146.9h1M29 146.9h1M30 146.9h1M27 148.9h1M12 150.9h1M17 152.9h1M28 154.9h1M12 156.9h1M8 158.9h1M15 162.9h1M16 162.9h1M18 162.9h1M22 164.9h1M31 164.9h1M32 164.9h1M34 164.9h1M19 166.9h1M20 166.9h1M25 166.9h1M30 166.9h1M31 166.9h1M32 166.9h1M34 166.9h1M24 168.9h1M31 168.9h1M32 168.9h1M33 168.9h1M16 170.9h1M20 174.9h1M24 174.9h1M36 174.9h1M41 174.9h1M50 174.9h1M51 174.9h1M20 176.9h1M30 176.9h1M36 176.9h1M45 176.9h1M57 176.9h1M58 176.9h1M59 176.9h1M20 178.9h1M32 178.9h1M38 178.9h1M47 178.9h1M54 178.9h1M20 180.9h1M24 180.9h1M36 180.9h1M41 180.9h1M50 180.9h1M51 180.9h1M12 182.9h1M13 182.9h1M18 182.9h1M19 182.9h1M8 184.9h1M14 188.9h1M15 188.9h1M17 188.9h1M20 190.9h1M23 190.9h1M28 192.9h1M40 192.9h1M42 192.9h1M47 192.9h1M56 192.9h1M61 192.9h1M16 194.9h1M22 194.9h1M24 194.9h1M28 194.9h1M40 194.9h1M47 194.9h1M49 194.9h1M53 194.9h1M55 194.9h1M56 194.9h1M57 194.9h1M59 194.9h1M20 196.9h1M21 196.9h1M27 196.9h1M36 196.9h1M47 196.9h1M59 196.9h1M61 196.9h1M20 198.9h1M29 198.9h1M40 198.9h1M52 198.9h1M54 198.9h1M55 198.9h1M57 198.9h1M60 198.9h1M12 200.9h1M16 202.9h1M25 202.9h1M36 202.9h1M48 202.9h1M53 202.9h1M8 204.9h1M12 208.9h1M13 208.9h1M15 208.9h1M16 212.9h1M21 212.9h1M23 212.9h1M31 212.9h1M40 212.9h1M55 212.9h1M61 212.9h1M16 214.9h1M26 214.9h1M47 214.9h1M48 214.9h1M50 214.9h1M52 214.9h1M54 214.9h1M56 214.9h1M58 214.9h1M60 214.9h1M16 216.9h1M26 216.9h1M32 216.9h1M41 216.9h1M53 216.9h1M54 216.9h1M55 216.9h1M16 218.9h1M20 218.9h1M32 218.9h1M37 218.9h1M46 218.9h1M47 218.9h1M16 222.9h1M24 222.9h1M25 222.9h1M26 222.9h1M8 224.9h1M14 228.9h1M21 228.9h1M30 228.9h1M35 228.9h1M42 228.9h1M52 228.9h1M59 228.9h1M33 230.9h1M47 230.9h1M48 230.9h1M49 230.9h1M15 232.9h1M22 232.9h1M27 232.9h1M32 232.9h1M47 232.9h1M56 232.9h1M57 232.9h1M59 232.9h1M24 234.9h1M38 234.9h1M53 234.9h1M59 234.9h1M61 234.9h1M20 236.9h1M34 236.9h1M35 236.9h1M36 236.9h1M19 238.9h1M20 238.9h1M29 238.9h1M43 238.9h1M45 238.9h1M23 240.9h1M29 240.9h1M32 240.9h1M36 240.9h1M41 240.9h1M16 242.9h1M26 244.9h1M31 244.9h1M37 244.9h1M38 244.9h1M39 244.9h1M19 246.9h1M24 246.9h1M31 246.9h1M41 246.9h1M42 246.9h1M43 246.9h1M51 246.9h1M53 246.9h1M24 248.9h1M31 248.9h1M41 248.9h1M43 248.9h1M50 248.9h1M16 250.9h1M21 252.9h1M24 254.9h1M31 254.9h1M41 254.9h1M43 254.9h1M44 254.9h1M51 254.9h1M16 256.9h1M28 258.9h1M32 258.9h1M37 258.9h1M39 258.9h1M40 258.9h1M27 260.9h1M12 262.9h1M17 264.9h1M28 266.9h1M12 268.9h1M8 270.9h1M16 274.9h1M17 274.9h1M18 274.9h1M26 274.9h1M26 276.9h1M36 276.9h1M37 276.9h1M38 276.9h1M46 276.9h1M47 276.9h1M48 276.9h1M16 278.9h1M19 278.9h1M33 278.9h1M34 278.9h1M35 278.9h1M16 280.9h1M24 280.9h1M26 280.9h1M34 280.9h1M42 280.9h1M50 280.9h1M58 280.9h1M24 282.9h1M29 282.9h1M38 282.9h1M43 282.9h1M45 282.9h1M46 282.9h1M24 284.9h1M27 284.9h1M29 286.9h1M35 286.9h1M44 286.9h1M49 286.9h1M24 288.9h1M34 288.9h1M48 288.9h1M49 288.9h1M50 288.9h1M29 290.9h1M36 290.9h1M18 292.9h1M19 292.9h1M24 292.9h1M30 292.9h1M32 292.9h1M36 292.9h1M37 292.9h1M38 292.9h1M40 292.9h1M41 292.9h1M47 292.9h1M49 292.9h1M19 294.9h1M20 294.9h1M33 294.9h1M35 294.9h1M50 294.9h1M56 294.9h1M20 296.9h1M26 296.9h1M28 296.9h1M32 296.9h1M43 296.9h1M47 296.9h1M52 296.9h1M53 296.9h1M60 296.9h1M34 298.9h1M39 298.9h1M49 298.9h1M23 300.9h1M33 300.9h1M34 300.9h1M41 300.9h1M43 300.9h1M34 302.9h1M37 302.9h1M20 304.9h1M23 306.9h1M28 306.9h1M35 306.9h1M39 306.9h1M50 306.9h1M60 306.9h1M45 308.9h1M46 308.9h1M47 308.9h1M48 308.9h1M56 308.9h1M60 308.9h1M61 308.9h1M37 310.9h1M43 310.9h1M20 312.9h1M16 314.9h1M25 316.9h1M39 316.9h1M40 316.9h1M41 316.9h1M51 316.9h1M12 318.9h1M15 320.9h1M28 320.9h1M30 320.9h1M25 322.9h1M34 322.9h1M29 324.9h1M37 324.9h1M20 326.9h1M26 326.9h1M28 326.9h1M30 326.9h1M41 326.9h1M46 326.9h1M55 326.9h1M60 326.9h1M61 326.9h1M23 328.9h1M24 328.9h1M29 328.9h1M36 328.9h1M38 328.9h1M39 328.9h1M40 328.9h1M48 328.9h1M49 328.9h1M50 328.9h1M51 328.9h1M52 328.9h1M57 328.9h1M58 328.9h1M29 330.9h1M35 330.9h1M42 330.9h1M44 330.9h1M45 330.9h1M33 332.9h1M36 332.9h1M20 334.9h1M16 336.9h1M19 340.9h1M28 340.9h1M29 340.9h1M36 340.9h1M38 340.9h1M41 342.9h1M50 342.9h1M51 342.9h1M16 344.9h1M21 346.9h1M33 348.9h1M16 350.9h1M12 352.9h1M17 354.9h1M29 356.9h1M12 358.9h1M8 360.9h1M12 364.9h1M13 364.9h1M15 364.9h1M25 366.9h1M39 366.9h1M40 366.9h1M41 366.9h1M31 368.9h1M42 368.9h1M49 368.9h1M50 368.9h1M53 368.9h1M54 368.9h1M19 370.9h1M24 370.9h1M37 370.9h1M38 370.9h1M19 372.9h1M24 372.9h1M29 372.9h1M38 372.9h1M49 372.9h1M55 372.9h1M57 372.9h1M59 372.9h1M60 372.9h1M61 372.9h1M15 374.9h1M25 376.9h1M31 376.9h1M40 376.9h1M41 376.9h1M42 376.9h1M19 378.9h1M24 378.9h1M25 378.9h1M32 378.9h1M34 378.9h1M16 382.9h1M21 384.9h1M24 386.9h1M34 386.9h1M35 386.9h1M36 386.9h1M27 388.9h1M32 388.9h1M37 388.9h1M46 388.9h1M51 388.9h1M24 390.9h1M33 390.9h1M38 390.9h1M43 390.9h1M58 390.9h1M27 392.9h1M32 392.9h1M41 392.9h1M50 392.9h1M51 392.9h1M52 392.9h1M53 392.9h1M24 394.9h1M34 394.9h1M55 394.9h1M48 396.9h1M27 398.9h1M32 398.9h1M45 398.9h1M46 398.9h1M27 400.9h1M32 400.9h1M37 400.9h1M46 400.9h1M57 400.9h1M16 402.9h1M12 404.9h1M20 404.9h1M25 404.9h1M26 404.9h1M33 404.9h1M34 404.9h1M20 406.9h1M23 406.9h1M28 408.9h1M40 408.9h1M42 408.9h1M47 408.9h1M56 408.9h1M61 408.9h1M16 410.9h1M22 410.9h1M24 410.9h1M28 410.9h1M40 410.9h1M47 410.9h1M49 410.9h1M53 410.9h1M55 410.9h1M56 410.9h1M57 410.9h1M59 410.9h1M20 412.9h1M21 412.9h1M27 412.9h1M36 412.9h1M47 412.9h1M59 412.9h1M61 412.9h1M20 414.9h1M29 414.9h1M40 414.9h1M52 414.9h1M54 414.9h1M55 414.9h1M57 414.9h1M60 414.9h1M12 416.9h1M16 418.9h1M25 418.9h1M36 418.9h1M48 418.9h1M53 418.9h1M19 420.9h1M24 420.9h1M43 420.9h1M44 420.9h1M19 422.9h1M24 422.9h1M29 422.9h1M38 422.9h1M49 422.9h1M55 422.9h1M57 422.9h1M59 422.9h1M60 422.9h1M61 422.9h1M29 424.9h1M35 424.9h1M44 424.9h1M55 424.9h1M19 426.9h1M24 426.9h1M37 426.9h1M50 426.9h1M59 426.9h1M60 426.9h1M29 428.9h1M35 428.9h1M44 428.9h1M55 428.9h1M19 430.9h1M24 430.9h1M37 430.9h1M50 430.9h1M59 430.9h1M60 430.9h1M19 432.9h1M24 432.9h1M40 432.9h1M45 432.9h1M55 432.9h1M24 434.9h1M34 434.9h1M35 434.9h1M36 434.9h1M44 434.9h1M45 434.9h1M46 434.9h1M19 436.9h1M24 436.9h1M33 436.9h1M34 436.9h1M42 436.9h1M52 436.9h1M53 436.9h1M19 438.9h1M24 438.9h1M44 438.9h1M49 438.9h1M8 440.9h1M4 442.9h1M0 444.9h1" stroke="#d4d4d4" stroke-width="1.4" stroke-opacity="0.66" stroke-dasharray="0.75 0.25" fill="none"/>
</svg>

  </div>
  <div id="vscroll">
    <div class="abs" style="left:0;top:0;width:16px;height:67px;background:rgba(121,121,121,0.4)"></div>
    <div class="abs" style="left:5px;top:6.6px;width:6px;height:6px;background:#a0a0a0"></div>
    <div class="abs" style="left:0;top:537px;width:16px;height:2px;background:#a0a0a0"></div>
    <div class="abs" style="left:5px;top:536px;width:6px;height:6px;background:#a0a0a0"></div>
  </div>
</div>
<!-- STATUS BAR -->
<div id="status">
  <svg class="abs" style="left:19px;top:6px" width="15" height="15" viewBox="0 0 15 15"><circle cx="7.5" cy="7.5" r="6.6" fill="none" stroke="#fff" stroke-width="1.2"/><path d="M4.8 4.8l5.4 5.4M10.2 4.8l-5.4 5.4" stroke="#fff" stroke-width="1.2"/></svg>
  <span style="left:39px">0</span>
  <svg class="abs" style="left:52px;top:5px" width="17" height="15" viewBox="0 0 17 15"><path d="M8.5 1.3L15.8 14H1.2z" fill="none" stroke="#fff" stroke-width="1.2" stroke-linejoin="round"/><path d="M8.5 5.6v4.8" stroke="#fff" stroke-width="1.6"/><circle cx="8.5" cy="12" r="0.8" fill="#fff"/></svg>
  <span style="left:73px">0</span>
  <span style="left:666.5px">Ln 223, Col 2</span>
  <span style="left:775.5px;letter-spacing:0.35px">Spaces: 4</span>
  <span style="left:862px">LF</span>
  <span style="left:897.5px;letter-spacing:0.5px">TypeScript</span>
  <span style="left:990px;letter-spacing:0.25px">Layout: U.S.</span>
  <svg class="abs" style="left:1090.8px;top:5px" width="16" height="17" viewBox="0 0 16 17"><path d="M8 1.5a4.8 4.8 0 0 0-4.8 4.8v4.2L1.8 13h12.4l-1.4-2.5V6.3A4.8 4.8 0 0 0 8 1.5z" fill="none" stroke="#fff" stroke-width="1.2" stroke-linejoin="round"/><path d="M6.3 13.2a1.7 1.7 0 0 0 3.4 0" fill="none" stroke="#fff" stroke-width="1.2"/></svg>
</div>
<!-- window corners / edges -->
<div class="abs" style="left:0;top:3px;width:1px;height:29px;background:rgba(255,255,255,0.1)"></div>
<div class="abs" style="left:1124px;top:3px;width:1px;height:29px;background:rgba(255,255,255,0.1)"></div>
<div class="abs" style="left:0;top:73px;width:1125px;height:1px;background:rgba(0,0,0,0.28)"></div>
<div class="abs" style="left:0;top:73px;width:1px;height:48px;background:rgba(0,0,0,0.3)"></div>
<div class="abs" style="left:0;top:169px;width:1px;height:605px;background:rgba(0,0,0,0.3)"></div>
<div class="abs" style="left:1124px;top:74px;width:1px;height:673px;background:rgba(255,255,255,0.09)"></div>
<svg class="abs" style="left:0;top:0" width="4" height="4" viewBox="0 0 4 4"><path d="M0 0h3.7A3.7 3.7 0 0 0 0 3.7z" fill="#dcdcdc"/></svg>
<svg class="abs" style="left:1121px;top:0" width="4" height="4" viewBox="0 0 4 4"><path d="M4 0H.3A3.7 3.7 0 0 1 4 3.7z" fill="#dcdcdc"/></svg>
<svg class="abs" style="left:0;top:770px" width="4" height="4" viewBox="0 0 4 4"><path d="M0 4h4A4 4 0 0 1 0 0z" fill="#c4c4c4"/></svg>
<svg class="abs" style="left:1121px;top:770px" width="4" height="4" viewBox="0 0 4 4"><path d="M4 4H0A4 4 0 0 0 4 0z" fill="#c4c4c4"/></svg>
</body>
</html>
